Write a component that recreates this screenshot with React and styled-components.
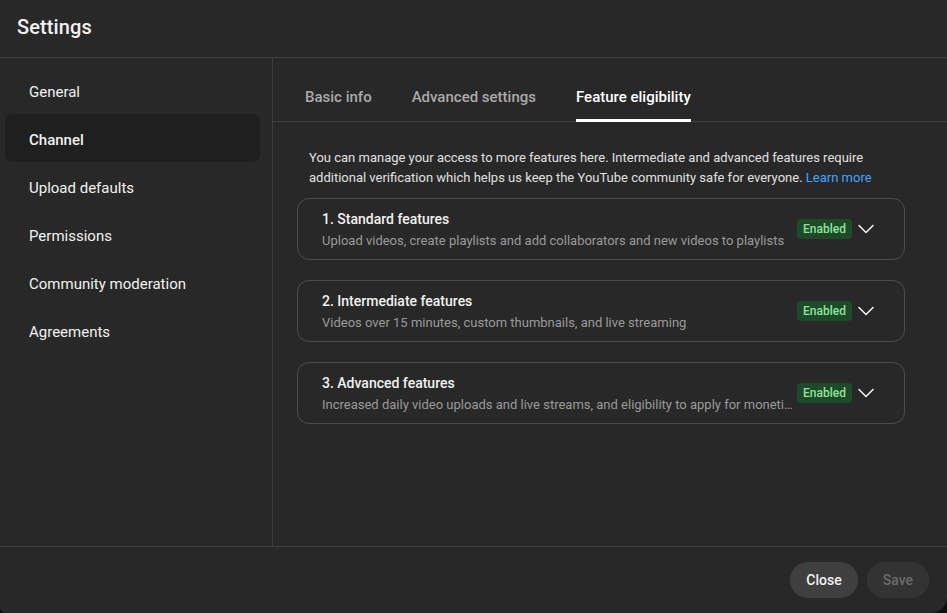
import React, { useState } from "react";
import styled, { createGlobalStyle } from "styled-components";

const GlobalStyle = createGlobalStyle`
  html, body {
    margin: 0;
    padding: 0;
    background: #0f0f0f;
  }
  * {
    box-sizing: border-box;
  }
`;

const Dialog = styled.div`
  width: 947px;
  height: 613px;
  display: flex;
  flex-direction: column;
  background: #282828;
  color: #f1f1f1;
  font-family: Roboto, "Noto Sans", Arial, sans-serif;
  border-radius: 0 0 16px 6px;
  overflow: hidden;
`;

const Header = styled.header`
  height: 58px;
  flex: none;
  display: flex;
  align-items: center;
  padding: 0 17px 3px;
  border-bottom: 1px solid #3e3e3e;
  h1 {
    margin: 0;
    font-size: 20px;
    font-weight: 500;
    color: #f1f1f1;
    letter-spacing: 0.1px;
  }
`;

const Body = styled.div`
  flex: 1;
  display: flex;
  min-height: 0;
`;

const Sidebar = styled.nav`
  width: 273px;
  flex: none;
  border-right: 1px solid #3e3e3e;
  padding: 8px 12px 0 5px;
  display: flex;
  flex-direction: column;
`;

const NavItem = styled.div`
  height: 48px;
  display: flex;
  align-items: center;
  padding: 3px 0 0 24px;
  border-radius: 8px;
  font-size: 15px;
  font-weight: ${(p) => (p.$active ? 500 : 400)};
  color: #f1f1f1;
  background: ${(p) => (p.$active ? "#1f1f1f" : "transparent")};
  cursor: pointer;
`;

const Panel = styled.section`
  flex: 1;
  display: flex;
  flex-direction: column;
  min-width: 0;
`;

const Tabs = styled.div`
  height: 64px;
  flex: none;
  display: flex;
  gap: 40px;
  padding-left: 32px;
  border-bottom: 1px solid #3e3e3e;
`;

const Tab = styled.div`
  display: flex;
  align-items: center;
  padding-top: 16px;
  font-size: 15px;
  font-weight: 500;
  color: ${(p) => (p.$active ? "#ffffff" : "#aaaaaa")};
  border-bottom: 3px solid ${(p) => (p.$active ? "#ffffff" : "transparent")};
  margin-bottom: -1px;
  cursor: pointer;
`;

const Content = styled.div`
  padding: 26px 0 0 24px;
  width: 632px;
  display: flex;
  flex-direction: column;
  gap: 20px;
`;

const Intro = styled.p`
  margin: 0 0 -10px;
  padding: 0 12px;
  font-size: 13px;
  line-height: 20px;
  color: #e0e0e0;
  a {
    color: #3ea6ff;
    text-decoration: none;
  }
`;

const Card = styled.div`
  height: 62px;
  border: 1px solid #4d4d4d;
  border-radius: 12px;
  display: flex;
  align-items: center;
  padding: 0 26px 0 24px;
`;

const CardText = styled.div`
  flex: 1;
  min-width: 0;
  padding: 1px 3px 0 0;
`;

const CardTitle = styled.div`
  font-size: 14px;
  font-weight: 500;
  line-height: 20px;
  color: #f1f1f1;
`;

const CardSub = styled.div`
  font-size: 13px;
  line-height: 20px;
  color: #9a9a9a;
  white-space: nowrap;
  overflow: hidden;
  text-overflow: ellipsis;
  margin-top: 2px;
`;

const Badge = styled.span`
  flex: none;
  height: 20px;
  padding: 0 6px;
  display: inline-flex;
  align-items: center;
  border-radius: 4px;
  background: #1e4a29;
  color: #8ee39c;
  font-size: 12px;
  font-weight: 500;
`;

const Chevron = styled.svg`
  flex: none;
  width: 24px;
  height: 24px;
  margin-left: 2px;
`;

const Footer = styled.footer`
  height: 67px;
  flex: none;
  border-top: 1px solid #3e3e3e;
  display: flex;
  align-items: center;
  justify-content: flex-end;
  gap: 9px;
  padding: 0 18px 0 0;
`;

const Button = styled.button`
  height: 36px;
  padding: 0 16px;
  border: none;
  border-radius: 18px;
  font-family: inherit;
  font-size: 14px;
  font-weight: 500;
  background: ${(p) => (p.disabled ? "#333333" : "#3f3f3f")};
  color: ${(p) => (p.disabled ? "#6b6b6b" : "#f1f1f1")};
  cursor: ${(p) => (p.disabled ? "default" : "pointer")};
`;

const navItems = [
  "General",
  "Channel",
  "Upload defaults",
  "Permissions",
  "Community moderation",
  "Agreements",
];

const tabs = ["Basic info", "Advanced settings", "Feature eligibility"];

const features = [
  {
    title: "1. Standard features",
    sub: "Upload videos, create playlists and add collaborators and new videos to playlists",
  },
  {
    title: "2. Intermediate features",
    sub: "Videos over 15 minutes, custom thumbnails, and live streaming",
  },
  {
    title: "3. Advanced features",
    sub: "Increased daily video uploads and live streams, and eligibility to apply for monetization",
  },
];

export default function App() {
  const [nav, setNav] = useState("Channel");
  const [tab, setTab] = useState("Feature eligibility");

  return (
    <>
      <GlobalStyle />
      <Dialog>
        <Header>
          <h1>Settings</h1>
        </Header>
        <Body>
          <Sidebar>
            {navItems.map((n) => (
              <NavItem key={n} $active={n === nav} onClick={() => setNav(n)}>
                {n}
              </NavItem>
            ))}
          </Sidebar>
          <Panel>
            <Tabs>
              {tabs.map((t) => (
                <Tab key={t} $active={t === tab} onClick={() => setTab(t)}>
                  {t}
                </Tab>
              ))}
            </Tabs>
            <Content>
              <Intro>
                You can manage your access to more features here. Intermediate and advanced
                features require additional verification which helps us keep the YouTube
                community safe for everyone. <a href="#">Learn more</a>
              </Intro>
              {features.map((f) => (
                <Card key={f.title}>
                  <CardText>
                    <CardTitle>{f.title}</CardTitle>
                    <CardSub>{f.sub}</CardSub>
                  </CardText>
                  <Badge>Enabled</Badge>
                  <Chevron viewBox="0 0 24 24" fill="none">
                    <path
                      d="M5 8.5l7 7 7-7"
                      stroke="#f1f1f1"
                      strokeWidth="1.6"
                      strokeLinecap="round"
                      strokeLinejoin="round"
                    />
                  </Chevron>
                </Card>
              ))}
            </Content>
          </Panel>
        </Body>
        <Footer>
          <Button>Close</Button>
          <Button disabled>Save</Button>
        </Footer>
      </Dialog>
    </>
  );
}
